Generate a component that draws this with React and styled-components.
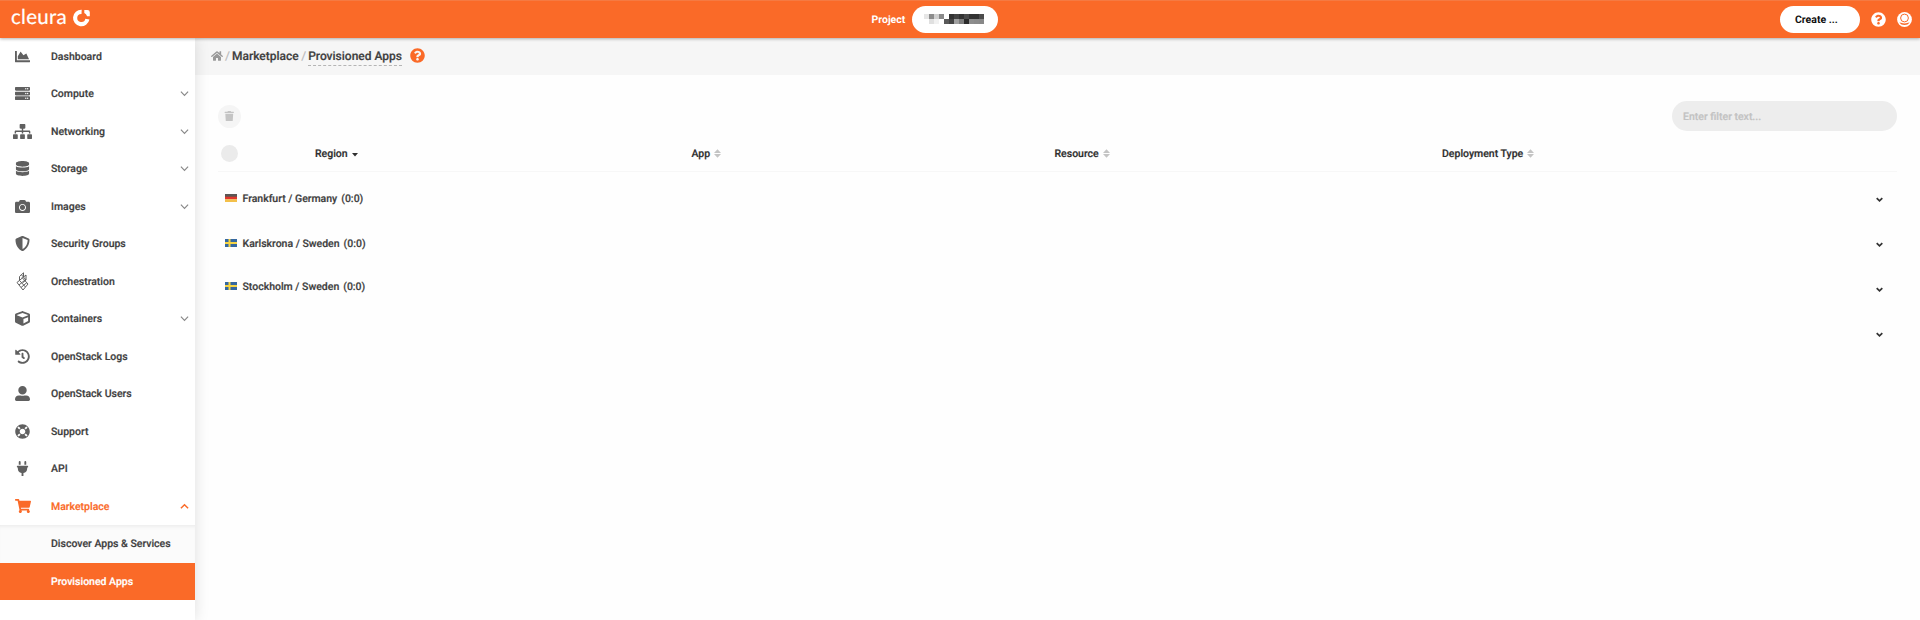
import React from 'react';
import styled, { createGlobalStyle, css } from 'styled-components';
import {
  FaChartArea, FaServer, FaSitemap, FaDatabase, FaCamera, FaShieldAlt, FaCube, FaHistory,
  FaUserAlt, FaLifeRing, FaPlug, FaShoppingCart, FaHome, FaTrash, FaQuestionCircle,
} from 'react-icons/fa';

const ORANGE = '#fa6a28';

const GlobalStyle = createGlobalStyle`
  * { box-sizing: border-box; }
  body {
    margin: 0;
    background: #fefefe;
    color: #3f3f3f;
    font: 500 10.5px/13px Roboto, "Liberation Sans", sans-serif;
    text-rendering: geometricPrecision;
    -webkit-text-stroke: 0.2px currentColor;
    overflow: hidden;
  }
  svg { flex: none; }
`;

const Page = styled.div`
  display: flex;
  flex-direction: column;
  height: 100vh;
`;

const TopBar = styled.header`
  display: grid;
  grid-template-columns: 871.5px 1fr auto;
  align-items: center;
  height: 37.5px;
  flex: none;
  background: ${ORANGE};
  border-top: 1px solid #f57a42;
  box-shadow: 0 1px 3px rgba(0, 0, 0, 0.3);
  color: #fff;
  z-index: 2;
`;

const Logo = styled.div`
  display: flex;
  align-items: center;
  gap: 7px;
  height: 34px;
  padding: 0 0 2px 11px;
  font: 400 20.5px/1 Lato, sans-serif;
`;

const LogoText = styled.span`
  width: 54px;
  letter-spacing: 0.25px;
  margin-top: -3px;
`;

const ProjectPicker = styled.div`
  display: flex;
  align-items: center;
  gap: 7px;
  font-weight: 700;
  -webkit-text-stroke: 0;
`;

const Pill = styled.div`
  display: flex;
  align-items: center;
  width: ${(p) => p.$width}px;
  height: 26.5px;
  padding-left: ${(p) => p.$pad}px;
  border-radius: 14px;
  background: #fff;
  color: #111;
  font-weight: 700;
  -webkit-text-stroke: 0;
`;

const Actions = styled.div`
  display: flex;
  align-items: center;
  padding-right: 8px;
  svg { display: block; }
`;

const IconGap = styled.span`
  margin-left: 11px;
`;

const Body = styled.div`
  display: flex;
  flex: 1;
  min-height: 0;
`;

const Sidebar = styled.nav`
  width: 195px;
  flex: none;
  background: #fff;
  box-shadow: 0 0 14px rgba(0, 0, 0, 0.13);
  z-index: 1;
`;

const NavItem = styled.div`
  display: grid;
  grid-template-columns: 45px 1fr 9px;
  column-gap: 6px;
  align-items: center;
  height: 37.5px;
  padding: 0 6.5px 0.5px 0;
  color: ${(p) => (p.$active ? ORANGE : '#3f3f3f')};
`;

const NavIcon = styled.span`
  display: flex;
  justify-content: center;
  color: ${(p) => (p.$active ? ORANGE : '#606060')};
`;

const SubItem = styled.div`
  display: flex;
  align-items: center;
  height: 37.5px;
  padding: 0 0 0.5px 51px;
  background: #fbfbfb;
  box-shadow: inset 0 4px 4px -3px rgba(0, 0, 0, 0.08);
  ${(p) => p.$selected && css`
    background: ${ORANGE};
    box-shadow: none;
    color: #fff;
  `}
`;

const Main = styled.main`
  flex: 1;
  min-width: 0;
`;

const Breadcrumb = styled.div`
  display: flex;
  align-items: center;
  height: 37.5px;
  padding: 0 0 1.5px 15.5px;
  background: #f6f6f6;
  font-size: 12px;
  line-height: 14px;
`;

const Slash = styled.span`
  margin: 0 2px 0 2.5px;
  color: #bbb;
  font-weight: 400;
`;

const Current = styled.span`
  padding: 3px 0 2px;
  border-bottom: 1px dashed #b5b5b5;
  margin: 0 7.5px 0 0;
`;

const Toolbar = styled.div`
  display: flex;
  justify-content: space-between;
  align-items: center;
  height: 30px;
  margin: 26px 23px 0 22.5px;
`;

const RoundButton = styled.div`
  display: flex;
  align-items: center;
  justify-content: center;
  width: 23px;
  height: 23px;
  border-radius: 50%;
  background: #f5f5f5;
  color: #c4c4c4;
`;

const Filter = styled.div`
  display: flex;
  align-items: center;
  width: 225px;
  height: 30px;
  padding-left: 11px;
  border-radius: 15px;
  background: #ededed;
  color: #c2c2c2;
`;

const TableHead = styled.div`
  display: grid;
  grid-template-columns: 97.5px 376.5px 363px 387.5px 1fr;
  align-items: center;
  height: 41px;
  margin: 0 23px 0 22.5px;
  padding-top: 4px;
  border-bottom: 1px solid #f7f7f7;
`;

const CheckCircle = styled.span`
  width: 17px;
  height: 17px;
  margin-left: 3.5px;
  border-radius: 50%;
  background: #ebebeb;
`;

const HeadCell = styled.span`
  display: flex;
  align-items: center;
  gap: 4px;
  color: #2f2f2f;
`;

const Regions = styled.div`
  padding: 5px 37px 0 30px;
`;

const RegionRow = styled.div`
  display: flex;
  justify-content: space-between;
  align-items: center;
  height: 45px;
`;

const RegionName = styled.span`
  display: flex;
  align-items: center;
  gap: 5.5px;
  padding-bottom: ${(p) => p.$lift}px;
`;

const Count = styled.span`
  margin-left: -1.5px;
`;

const PIXELS = [
  ['#e6e6e6', '#8c8c8c', '#cfcfcf', '#8a8a8a', '#fff', '#333', '#444', '#333', '#4a4a4a', '#333', '#333', '#4c4c4c'],
  ['#fff', '#e0e0e0', '#f1f1f1', '#fff', '#5a5a5a', '#444', '#a0a0a0', '#7d7d7d', '#2a2a2a', '#8d8d8d', '#8a8a8a', '#888'],
];

const MaskedName = () => (
  <svg width="60" height="10" shapeRendering="crispEdges">
    {PIXELS.flatMap((row, y) => row.map((c, x) => (
      <rect key={`${x}-${y}`} x={x * 5} y={y * 5} width="5" height="5" fill={c} />
    )))}
  </svg>
);

const LogoMark = () => (
  <svg width="18" height="18" viewBox="0 0 18 18">
    <path d="M9.600 2.800A6.200 6.200 0 1 0 15.400 10.200" fill="none" stroke="#fff" strokeWidth="4.200" />
    <path d="M12.300.9h3.100a2.400 2.400 0 0 1 2.400 2.400v4h-2.700a6 6 0 0 0-2.800-3.200z" fill="#fff" />
  </svg>
);

const Chevron = ({ up, color = '#888', width = 9, stroke = 1.3 }) => (
  <svg width={width} height={width} viewBox="0 0 10 10">
    <path d={up ? 'M1 7 5 3l4 4' : 'M1 3l4 4 4-4'} fill="none" stroke={color} strokeWidth={stroke} />
  </svg>
);

const UserBadge = () => (
  <svg width="15" height="15" viewBox="0 0 15 15">
    <circle cx="7.5" cy="7.5" r="7.4" fill="#fff" />
    <circle cx="7.5" cy="6" r="3.9" fill="none" stroke={ORANGE} strokeWidth="1" />
    <path d="M2.400 10.600c1.500-.4 2.300.9 5.100.9s3.600-1.300 5.100-.9c-1.100 1.700-2.900 2.500-5.100 2.500s-4-.8-5.100-2.500z" fill={ORANGE} />
  </svg>
);

const Lattice = () => (
  <svg width="13" height="19" viewBox="0 0 13 19" fill="none" stroke="#606060" strokeWidth="1">
    <path d="M7.500.8V5L1 10.500 7 18l5-6L6 5.500M7.500.8 3.500 4.500v4M7.500 5 10 3v5L7 10.500M3.500 8.500l6 6.500M3 13l6-5M5 15.500l6-5M5.500 2.800 10 8" />
  </svg>
);

const SortIcon = () => (
  <svg width="7" height="9" viewBox="0 0 6 9" preserveAspectRatio="none" fill="#c4c4c4">
    <path d="M0 4 3 .3 6 4zM0 5h6L3 8.700z" />
  </svg>
);

const SortedIcon = () => (
  <svg width="6" height="7" viewBox="0 0 6 7"><path d="M0 3h6L3 6.500z" fill="#2f2f2f" /></svg>
);

const Flag = ({ country }) => (
  <svg width="12" height="8" viewBox="0 0 12 8">
    {country === 'de' ? (
      <>
        <rect width="12" height="3" fill="#5b5654" />
        <rect y="2.700" width="12" height="2.700" fill="#e0362c" />
        <rect y="5.300" width="12" height="2.700" fill="#f3c04a" />
      </>
    ) : (
      <>
        <rect width="12" height="8" fill="#3568a0" />
        <path d="M3.500 0h2v8h-2zM0 3.100h12v2H0z" fill="#f6d444" />
      </>
    )}
  </svg>
);

const NAV = [
  ['Dashboard', FaChartArea, 15],
  ['Compute', FaServer, 15, true],
  ['Networking', FaSitemap, 19, true],
  ['Storage', FaDatabase, 15, true],
  ['Images', FaCamera, 15, true],
  ['Security Groups', FaShieldAlt, 15],
  ['Orchestration', Lattice],
  ['Containers', FaCube, 15, true],
  ['OpenStack Logs', FaHistory, 15],
  ['OpenStack Users', FaUserAlt, 15],
  ['Support', FaLifeRing, 15],
  ['API', FaPlug, 15],
];

const REGIONS = [
  ['de', 'Frankfurt / Germany', 3],
  ['se', 'Karlskrona / Sweden', 3],
  ['se', 'Stockholm / Sweden', 7],
  [],
];

export default function App() {
  return (
    <Page>
      <GlobalStyle />
      <TopBar>
        <Logo><LogoText>cleura</LogoText><LogoMark /></Logo>
        <ProjectPicker>
          Project
          <Pill $width={86} $pad={12}><MaskedName /></Pill>
        </ProjectPicker>
        <Actions>
          <Pill $width={80} $pad={15}>Create ...</Pill>
          <IconGap><FaQuestionCircle size={15} /></IconGap>
          <IconGap><UserBadge /></IconGap>
        </Actions>
      </TopBar>
      <Body>
        <Sidebar>
          {NAV.map(([label, Icon, size, expandable]) => (
            <NavItem key={label}>
              <NavIcon><Icon size={size} /></NavIcon>
              {label}
              {expandable && <Chevron />}
            </NavItem>
          ))}
          <NavItem $active>
            <NavIcon $active><FaShoppingCart size={16} /></NavIcon>
            Marketplace
            <Chevron up color={ORANGE} stroke={1.6} />
          </NavItem>
          <SubItem>Discover Apps &amp; Services</SubItem>
          <SubItem $selected>Provisioned Apps</SubItem>
        </Sidebar>
        <Main>
          <Breadcrumb>
            <FaHome size={12} color="#999" />
            <Slash>/</Slash>
            Marketplace
            <Slash>/</Slash>
            <Current>Provisioned Apps</Current>
            <FaQuestionCircle size={15} color={ORANGE} />
          </Breadcrumb>
          <Toolbar>
            <RoundButton><FaTrash size={10.5} /></RoundButton>
            <Filter>Enter filter text...</Filter>
          </Toolbar>
          <TableHead>
            <CheckCircle />
            <HeadCell>Region <SortedIcon /></HeadCell>
            <HeadCell>App <SortIcon /></HeadCell>
            <HeadCell>Resource <SortIcon /></HeadCell>
            <HeadCell>Deployment Type <SortIcon /></HeadCell>
          </TableHead>
          <Regions>
            {REGIONS.map(([country, name, lift], i) => (
              <RegionRow key={i}>
                <RegionName $lift={lift || 0}>
                  {name && <><Flag country={country} />{name} <Count>(0:0)</Count></>}
                </RegionName>
                <Chevron color="#333" width={7} stroke={2.4} />
              </RegionRow>
            ))}
          </Regions>
        </Main>
      </Body>
    </Page>
  );
}
